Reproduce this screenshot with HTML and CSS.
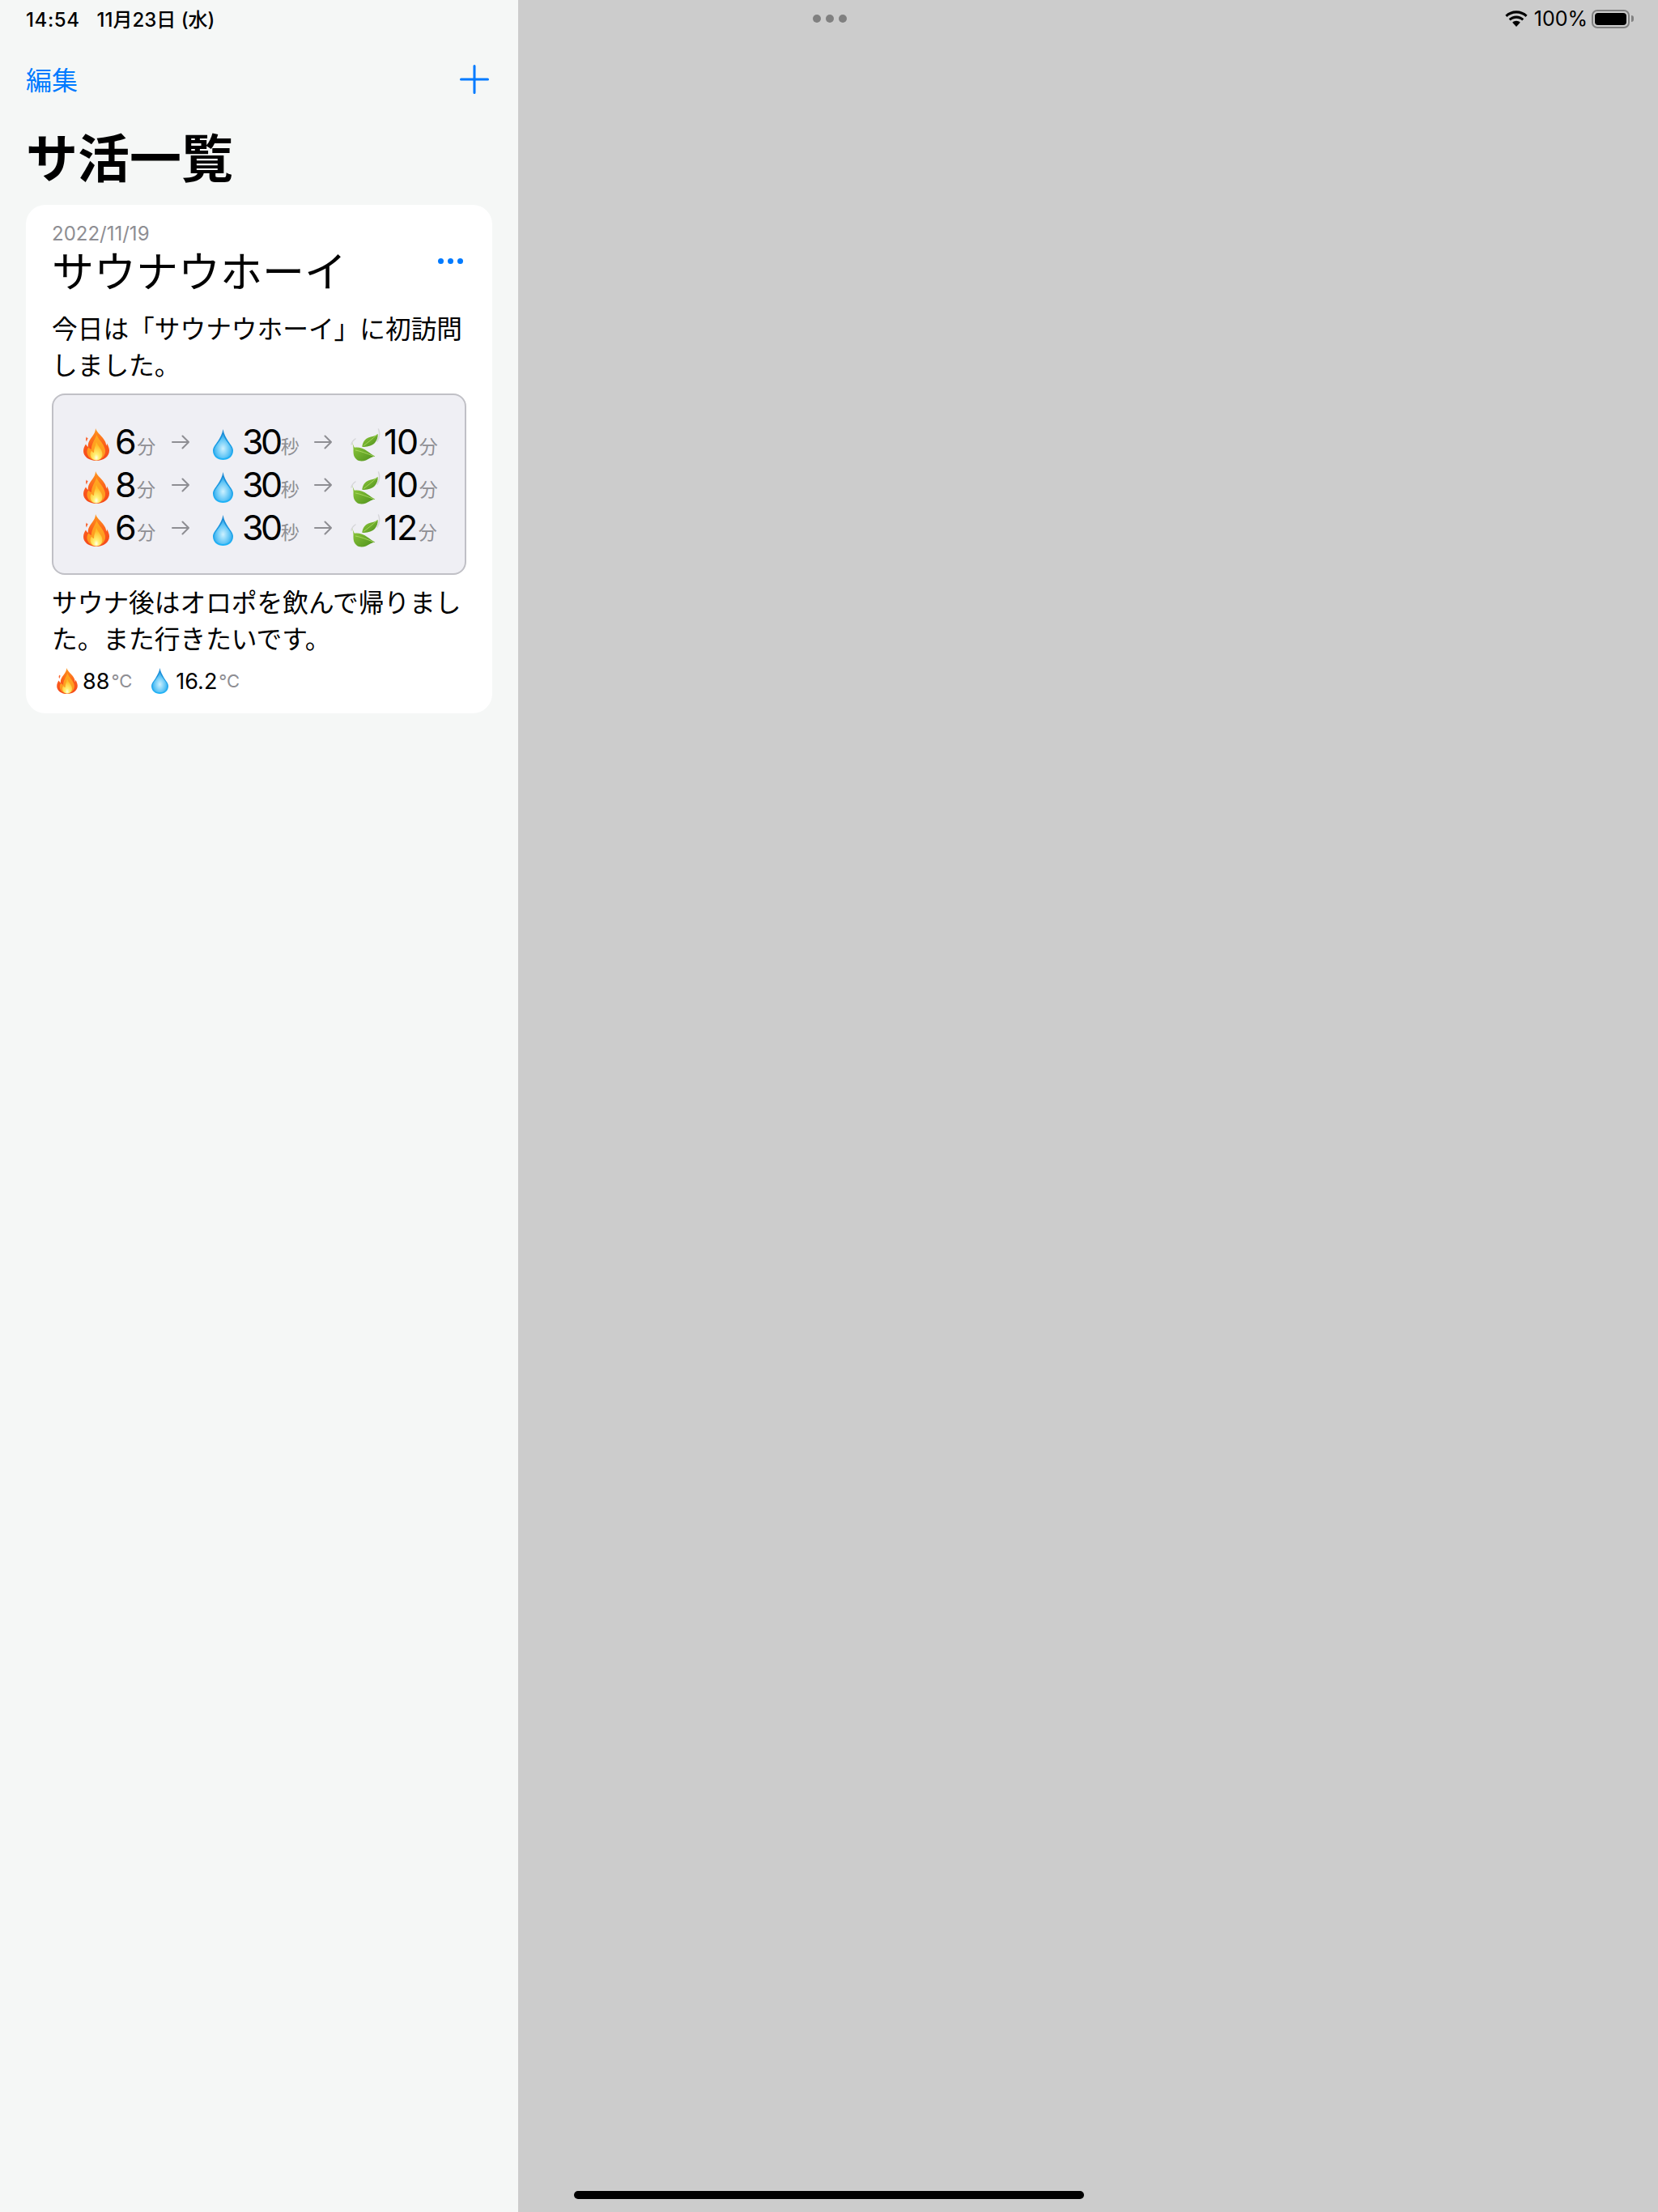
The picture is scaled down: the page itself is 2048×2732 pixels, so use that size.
FILE: index.html
```html
<!DOCTYPE html>
<html lang="ja">

<head>
    <meta charset="UTF-8">
    <meta name="viewport" content="width=device-width, initial-scale=1.0">
    <title>サ活一覧</title>
    <link rel="stylesheet" href="styles.css">
</head>

<body>
    <!-- shared emoji drawings -->
    <svg class="defs" aria-hidden="true">
        <defs>
            <linearGradient id="fireOuter" x1="0" y1="0" x2="0" y2="1">
                <stop offset="0" stop-color="#ff9a1e" />
                <stop offset="0.55" stop-color="#fb5a1c" />
                <stop offset="1" stop-color="#f4481a" />
            </linearGradient>
            <linearGradient id="fireMid" x1="0" y1="0" x2="0" y2="1">
                <stop offset="0" stop-color="#ffa920" />
                <stop offset="1" stop-color="#ff9320" />
            </linearGradient>
            <radialGradient id="fireCore" cx="0.5" cy="0.86" r="0.68">
                <stop offset="0" stop-color="#ffffee" />
                <stop offset="0.3" stop-color="#fff176" />
                <stop offset="1" stop-color="#ffbe28" />
            </radialGradient>
            <radialGradient id="dropFill" cx="0.5" cy="0.6" r="0.62">
                <stop offset="0" stop-color="#cdf1ff" />
                <stop offset="0.6" stop-color="#62c6f6" />
                <stop offset="1" stop-color="#1f9fe8" />
            </radialGradient>
            <linearGradient id="dropEdge" x1="0" y1="0" x2="0" y2="1">
                <stop offset="0" stop-color="#1a84cf" />
                <stop offset="1" stop-color="#1fb4f8" />
            </linearGradient>
            <linearGradient id="leafFill" x1="0" y1="0" x2="1" y2="1">
                <stop offset="0" stop-color="#93cc3e" />
                <stop offset="1" stop-color="#4c8f1c" />
            </linearGradient>

            <symbol id="fire" viewBox="0 0 32 40">
                <path fill="url(#fireOuter)" d="M15 0C17 6 24 10 27 16.500C28 18.500 28 20 28 21.500C28.800 20.500 29 19.500 29 18.500C31 22 32 25 32 27.500C32 35 25 40 16 40C7 40 0 35 0 28C0 24.500 1.600 21.500 3 19.500C3.600 21 4.500 22 5.800 23C5.400 17.500 8 14 11 10C13 7 15.200 4 15 0Z" />
                <path fill="#f9602a" d="M3.800 10.500C3 12.500 2.500 14 4 16.500C4.500 14.500 5 13 5.800 12C5 12 4.200 11.500 3.800 10.500Z" />
                <path fill="url(#fireMid)" d="M16.500 8C18 13 23 16.500 25.500 22.500C26.500 25 27.500 27 27 30C26 35.500 21 39.500 16 39.500C10.500 39.500 5 35.500 4.500 30C4.300 27.500 5 25 6.500 23.500C7.500 25 8.500 25.500 10 26C9.500 20.500 13.500 15 16.500 8Z" />
                <path fill="url(#fireCore)" d="M16 17C17.500 22 23.500 26 23.500 32C23.500 36.500 20 39.500 16 39.500C12 39.500 8.500 36.500 8.500 32C8.500 30.500 9 29 10 27.800C10.800 29 11.800 29.700 13 30C12.800 25.500 15 22 16 17Z" />
            </symbol>

            <symbol id="drop" viewBox="0 0 25 38">
                <path fill="url(#dropEdge)" d="M12.500 0C13.500 6 16 10 19 15C22 19.500 25 22.500 25 26.500C25 33.500 19.500 38 12.500 38C5.500 38 0 33.500 0 26.500C0 22.500 3 19.500 6 15C9 10 11.500 6 12.500 0Z" />
                <path fill="url(#dropFill)" d="M12.500 6C13.800 10.500 16 13.500 18.500 17C21 20.500 23.400 23 23.400 26.500C23.400 32.500 18.500 36 12.500 36C6.500 36 1.600 32.500 1.600 26.500C1.600 23 4 20.500 6.500 17C9 13.500 11.200 10.500 12.500 6Z" />
            </symbol>

            <symbol id="leaf" viewBox="0 0 37 41">
                <path fill="none" stroke="#d6d6da" stroke-width="1.500" stroke-linecap="round" d="M34.500 1C36.500 6 36 11 33 16" />
                <path fill="none" stroke="#d6d6da" stroke-width="1.500" stroke-linecap="round" d="M6 13C3 15 1.500 17 1 20" />
                <path fill="url(#leafFill)" d="M14.300 22.700C15 17 18 13 22 11.500C26 10 31 9.500 33.700 7C34 11 32.500 15 30 18C27 21.500 20 23.500 14.300 22.700Z" />
                <path fill="url(#leafFill)" d="M2 17C3 20 3.800 22 5 23.800C10 23 16 25 21 28.500C24 30.500 27 33 30.300 34.700C26 35 23 37.500 19 39.500C15 41 10 41 7 38C3 34.500 3.500 29 3.500 25C3.500 22 2.500 19.500 2 17Z" />
                <path fill="none" stroke="#b4e06a" stroke-width="0.800" d="M6 27C12 28 20 31 29 34.500" />
                <path fill="none" stroke="#b4e06a" stroke-width="0.800" d="M16 21.500C21 18 27 13 33 7.500" />
            </symbol>
        </defs>
    </svg>

    <div class="status-bar">
        <div class="status-left">
            <span class="status-time">14:54</span>
            <span>11月23日 (水)</span>
        </div>
        <div class="multi-dots"><i></i><i></i><i></i></div>
        <div class="status-right">
            <svg class="wifi" viewBox="0 0 28 20">
                <path d="M14 3.500C18.500 3.500 22.500 5.200 25.500 8L27.600 5.700C24 2.300 19.200 0.300 14 0.300C8.800 0.300 4 2.300 0.400 5.700L2.500 8C5.500 5.200 9.500 3.500 14 3.500Z" />
                <path d="M14 9.700C16.800 9.700 19.300 10.700 21.200 12.500L23.300 10.200C20.800 7.900 17.600 6.500 14 6.500C10.400 6.500 7.200 7.900 4.700 10.200L6.800 12.500C8.700 10.700 11.200 9.700 14 9.700Z" />
                <path d="M14 12.800C12.200 12.800 10.500 13.500 9.200 14.700L14 20L18.800 14.700C17.500 13.500 15.800 12.800 14 12.800Z" />
            </svg>
            <span class="battery-pct">100%</span>
            <div class="battery"><div class="battery-level"></div></div>
            <div class="battery-tip"></div>
        </div>
    </div>

    <div class="app">
        <aside class="sidebar">
            <nav class="nav-row">
                <a class="edit-btn">編集</a>
                <svg class="plus-btn" viewBox="0 0 36 36">
                    <path d="M18 1.500V34.500M1.500 18H34.500" />
                </svg>
            </nav>

            <h1 class="page-title">サ活一覧</h1>

            <article class="card">
                <div class="card-date">2022/11/19</div>
                <div class="card-head">
                    <h2 class="card-title">サウナウホーイ</h2>
                    <div class="more-btn"><i></i><i></i><i></i></div>
                </div>
                <p class="card-text">今日は「サウナウホーイ」に初訪問しました。</p>

                <div class="sets">
                    <div class="set-row">
                        <div class="seg seg-fire"><svg class="ico-fire"><use href="#fire" /></svg><span class="num">6</span><span class="unit">分</span></div>
                        <svg class="arrow" viewBox="0 0 22 18"><path d="M1 9H21M13.500 1.500L21 9L13.500 16.500" /></svg>
                        <div class="seg seg-drop"><svg class="ico-drop"><use href="#drop" /></svg><span class="num">30</span><span class="unit">秒</span></div>
                        <svg class="arrow" viewBox="0 0 22 18"><path d="M1 9H21M13.500 1.500L21 9L13.500 16.500" /></svg>
                        <div class="seg seg-leaf"><svg class="ico-leaf"><use href="#leaf" /></svg><span class="num">10</span><span class="unit">分</span></div>
                    </div>
                    <div class="set-row">
                        <div class="seg seg-fire"><svg class="ico-fire"><use href="#fire" /></svg><span class="num">8</span><span class="unit">分</span></div>
                        <svg class="arrow" viewBox="0 0 22 18"><path d="M1 9H21M13.500 1.500L21 9L13.500 16.500" /></svg>
                        <div class="seg seg-drop"><svg class="ico-drop"><use href="#drop" /></svg><span class="num">30</span><span class="unit">秒</span></div>
                        <svg class="arrow" viewBox="0 0 22 18"><path d="M1 9H21M13.500 1.500L21 9L13.500 16.500" /></svg>
                        <div class="seg seg-leaf"><svg class="ico-leaf"><use href="#leaf" /></svg><span class="num">10</span><span class="unit">分</span></div>
                    </div>
                    <div class="set-row">
                        <div class="seg seg-fire"><svg class="ico-fire"><use href="#fire" /></svg><span class="num">6</span><span class="unit">分</span></div>
                        <svg class="arrow" viewBox="0 0 22 18"><path d="M1 9H21M13.500 1.500L21 9L13.500 16.500" /></svg>
                        <div class="seg seg-drop"><svg class="ico-drop"><use href="#drop" /></svg><span class="num">30</span><span class="unit">秒</span></div>
                        <svg class="arrow" viewBox="0 0 22 18"><path d="M1 9H21M13.500 1.500L21 9L13.500 16.500" /></svg>
                        <div class="seg seg-leaf"><svg class="ico-leaf"><use href="#leaf" /></svg><span class="num">12</span><span class="unit">分</span></div>
                    </div>
                </div>

                <p class="card-text card-text-after">サウナ後はオロポを飲んで帰りました。また行きたいです。</p>

                <div class="temps">
                    <svg class="temp-fire"><use href="#fire" /></svg>
                    <span class="temp-num">88</span><span class="temp-unit">°C</span>
                    <svg class="temp-drop"><use href="#drop" /></svg>
                    <span class="temp-num">16.2</span><span class="temp-unit">°C</span>
                </div>
            </article>
        </aside>
        <main class="detail"></main>
    </div>

    <div class="home-indicator"></div>
</body>

</html>
```

FILE: styles.css
```css
* {
    box-sizing: border-box;
}

body {
    margin: 0;
    width: 2048px;
    height: 2732px;
    overflow: hidden;
    position: relative;
    background-color: #cccccc;
    color: #000;
    font-family: Inter, "Noto Sans CJK JP", sans-serif;
}

.defs {
    display: block;
    width: 0;
    height: 0;
}

.app {
    display: flex;
    height: 2732px;
}

.sidebar {
    width: 640px;
    padding: 78px 32px 0;
    background-color: #f5f7f6;
}

.detail {
    flex: 1;
    background-color: #cccccc;
}

/* status bar sits over both panes */
.status-bar {
    position: absolute;
    top: 0;
    left: 0;
    right: 0;
    height: 46px;
    padding: 0 30px 0 32px;
    display: grid;
    grid-template-columns: 1fr auto 1fr;
    align-items: center;
    font-size: 24px;
}

.status-left {
    display: flex;
    align-items: baseline;
    gap: 21px;
    margin-top: -1px;
    font-weight: 500;
}

.status-time {
    letter-spacing: 0.6px;
}

.multi-dots {
    display: flex;
    gap: 6px;
}

.multi-dots i {
    width: 10px;
    height: 10px;
    border-radius: 50%;
    background-color: #808080;
}

.status-right {
    display: flex;
    justify-content: flex-end;
    align-items: center;
}

.wifi {
    width: 28px;
    height: 20px;
    margin-right: 8px;
}

.battery-pct {
    margin-right: 5px;
    font-size: 25px;
}

.battery {
    width: 47px;
    height: 23px;
    padding: 2px;
    border: 2px solid #808080;
    border-radius: 7px;
}

.battery-level {
    height: 100%;
    background-color: #000;
    border-radius: 4px;
}

.battery-tip {
    width: 3px;
    height: 8px;
    margin-left: 2px;
    background-color: #808080;
    border-radius: 0 3px 3px 0;
}

/* nav */
.nav-row {
    display: flex;
    justify-content: space-between;
    align-items: center;
    height: 40px;
    padding-right: 4px;
}

.edit-btn {
    margin-top: -2px;
    font-size: 32px;
    color: #007aff;
}

.plus-btn {
    width: 36px;
    height: 36px;
}

.plus-btn path {
    fill: none;
    stroke: #007aff;
    stroke-width: 3px;
    stroke-linecap: round;
}

.page-title {
    margin: 38px 0 17px;
    font-size: 64px;
    line-height: 80px;
    font-weight: 700;
}

/* card */
.card {
    height: 628px;
    padding: 21px 32px 0;
    background-color: #fff;
    border-radius: 24px;
}

.card-date {
    font-size: 24px;
    line-height: 30px;
    color: #8e8e93;
}

.card-head {
    display: flex;
    justify-content: space-between;
    height: 60px;
}

.card-title {
    margin: 3px 0 0;
    font-size: 52px;
    line-height: 60px;
    font-weight: 400;
}

.more-btn {
    display: flex;
    gap: 5px;
    margin: 15px 4px 0 0;
}

.more-btn i {
    width: 7px;
    height: 7px;
    border-radius: 50%;
    background-color: #007aff;
}

.card-text {
    margin: 20px 0 0;
    font-size: 31.7px;
    line-height: 45px;
}

.card-text-after {
    margin-top: 12px;
}

/* sets box */
.sets {
    margin-top: 12px;
    height: 224px;
    padding: 31px 0 0 37px;
    background-color: #efeff4;
    border: 2px solid #c0c0c6;
    border-radius: 16px;
}

.set-row {
    display: grid;
    grid-template-columns: 109px 22px 154px 22px auto;
    align-items: center;
    height: 53px;
}

.seg {
    display: flex;
    align-items: center;
}

.seg svg {
    margin-top: 7px;
}

.seg-drop {
    padding-left: 29px;
}

.seg-leaf {
    padding-left: 23px;
}

.ico-fire {
    width: 32px;
    height: 40px;
    margin-right: 7px;
}

.ico-drop {
    width: 25px;
    height: 38px;
    margin-right: 11px;
}

.ico-leaf {
    width: 37px;
    height: 41px;
    margin-right: 4px;
}

.num {
    font-size: 43px;
    line-height: 53px;
    letter-spacing: -1.5px;
}

.seg-drop .num {
    letter-spacing: -3.500px;
}

.unit {
    margin: 12px 0 0 2px;
    font-size: 23px;
    line-height: 30px;
    color: #8e8e93;
}

.seg-drop .unit {
    margin-left: 1px;
}

.arrow {
    width: 22px;
    height: 18px;
}

.arrow path {
    fill: none;
    stroke: #8e8e93;
    stroke-width: 2px;
    stroke-linecap: round;
    stroke-linejoin: round;
}

/* temperatures */
.temps {
    display: flex;
    align-items: center;
    height: 40px;
    margin-top: 9px;
    padding-left: 6px;
}

.temp-fire {
    width: 26px;
    height: 32px;
    margin-right: 6px;
}

.temp-drop {
    width: 21px;
    height: 32px;
    margin: 0 9px 0 24px;
}

.temp-num {
    font-size: 27px;
}

.temp-unit {
    margin-left: 2px;
    font-size: 22px;
    color: #8e8e93;
}

.home-indicator {
    position: absolute;
    left: 709px;
    bottom: 16px;
    width: 630px;
    height: 10px;
    background-color: #000;
    border-radius: 5px;
}
```
